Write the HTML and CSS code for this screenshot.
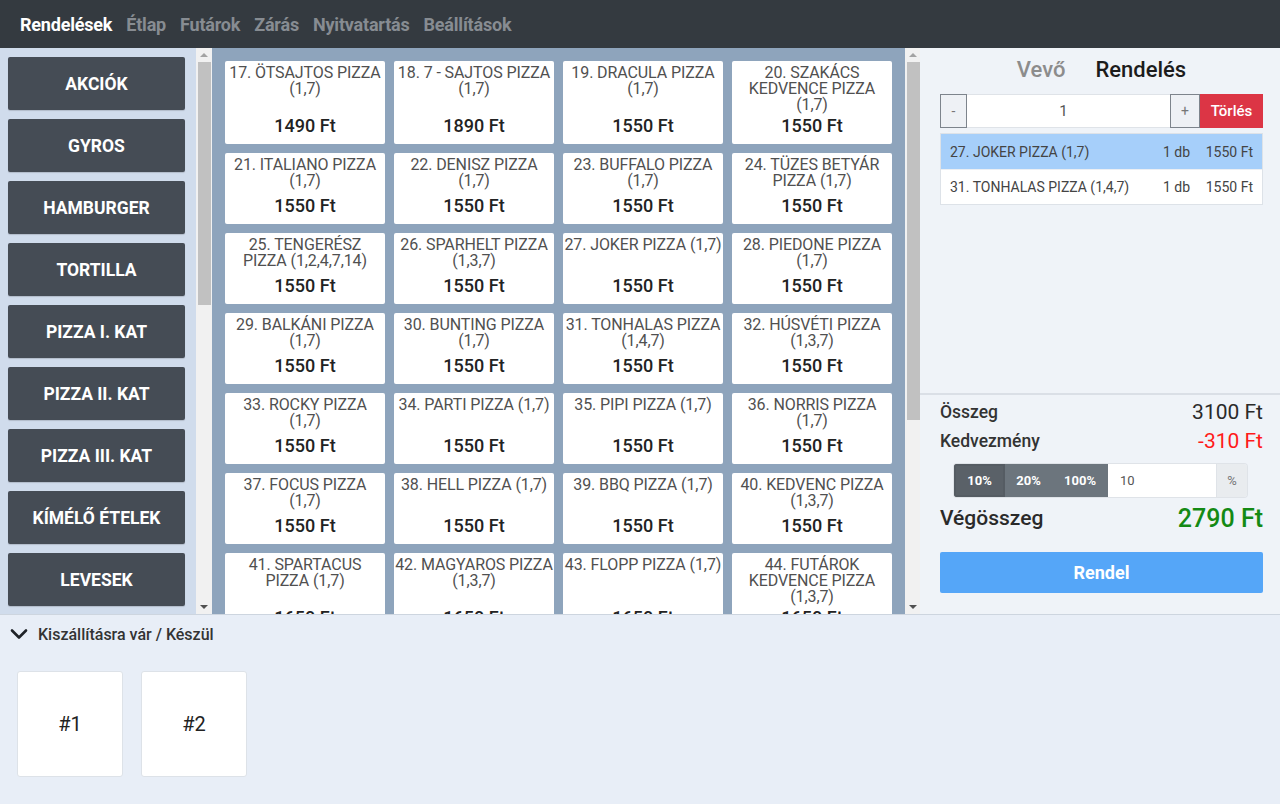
FILE: index.html
```html
<!DOCTYPE html>
<html lang="hu">
<head>
<meta charset="utf-8">
<title>Rendelések</title>
<link rel="stylesheet" href="styles.css">
</head>
<body>
<header class="topbar">
  <a class="nav-item active">Rendelések</a>
  <a class="nav-item">Étlap</a>
  <a class="nav-item">Futárok</a>
  <a class="nav-item">Zárás</a>
  <a class="nav-item">Nyitvatartás</a>
  <a class="nav-item">Beállítások</a>
</header>

<main class="main">
  <div class="cats">
    <nav class="cat-list">
      <button class="cat">AKCIÓK</button>
      <button class="cat">GYROS</button>
      <button class="cat">HAMBURGER</button>
      <button class="cat">TORTILLA</button>
      <button class="cat">PIZZA I. KAT</button>
      <button class="cat">PIZZA II. KAT</button>
      <button class="cat">PIZZA III. KAT</button>
      <button class="cat">KÍMÉLŐ ÉTELEK</button>
      <button class="cat">LEVESEK</button>
    </nav>
    <div class="scrollbar sb-cats">
      <div class="sb-btn"><span class="tri-up"></span></div>
      <div class="sb-track"><div class="sb-thumb" style="height: 243px"></div></div>
      <div class="sb-btn"><span class="tri-down"></span></div>
    </div>
  </div>

  <div class="menu-wrap">
    <section class="menu">
      <div class="grid">
        <div class="item"><div class="name">17. ÖTSAJTOS PIZZA (1,7)</div><div class="price">1490 Ft</div></div>
        <div class="item"><div class="name">18. 7 - SAJTOS PIZZA (1,7)</div><div class="price">1890 Ft</div></div>
        <div class="item"><div class="name">19. DRACULA PIZZA (1,7)</div><div class="price">1550 Ft</div></div>
        <div class="item"><div class="name">20. SZAKÁCS KEDVENCE PIZZA (1,7)</div><div class="price">1550 Ft</div></div>
        <div class="item"><div class="name">21. ITALIANO PIZZA (1,7)</div><div class="price">1550 Ft</div></div>
        <div class="item"><div class="name">22. DENISZ PIZZA (1,7)</div><div class="price">1550 Ft</div></div>
        <div class="item"><div class="name">23. BUFFALO PIZZA (1,7)</div><div class="price">1550 Ft</div></div>
        <div class="item"><div class="name">24. TÜZES BETYÁR PIZZA (1,7)</div><div class="price">1550 Ft</div></div>
        <div class="item"><div class="name">25. TENGERÉSZ PIZZA (1,2,4,7,14)</div><div class="price">1550 Ft</div></div>
        <div class="item"><div class="name">26. SPARHELT PIZZA (1,3,7)</div><div class="price">1550 Ft</div></div>
        <div class="item"><div class="name">27. JOKER PIZZA (1,7)</div><div class="price">1550 Ft</div></div>
        <div class="item"><div class="name">28. PIEDONE PIZZA (1,7)</div><div class="price">1550 Ft</div></div>
        <div class="item"><div class="name">29. BALKÁNI PIZZA (1,7)</div><div class="price">1550 Ft</div></div>
        <div class="item"><div class="name">30. BUNTING PIZZA (1,7)</div><div class="price">1550 Ft</div></div>
        <div class="item"><div class="name">31. TONHALAS PIZZA (1,4,7)</div><div class="price">1550 Ft</div></div>
        <div class="item"><div class="name">32. HÚSVÉTI PIZZA (1,3,7)</div><div class="price">1550 Ft</div></div>
        <div class="item"><div class="name">33. ROCKY PIZZA<br>(1,7)</div><div class="price">1550 Ft</div></div>
        <div class="item"><div class="name">34. PARTI PIZZA (1,7)</div><div class="price">1550 Ft</div></div>
        <div class="item"><div class="name">35. PIPI PIZZA (1,7)</div><div class="price">1550 Ft</div></div>
        <div class="item"><div class="name">36. NORRIS PIZZA (1,7)</div><div class="price">1550 Ft</div></div>
        <div class="item"><div class="name">37. FOCUS PIZZA<br>(1,7)</div><div class="price">1550 Ft</div></div>
        <div class="item"><div class="name">38. HELL PIZZA (1,7)</div><div class="price">1550 Ft</div></div>
        <div class="item"><div class="name">39. BBQ PIZZA (1,7)</div><div class="price">1550 Ft</div></div>
        <div class="item"><div class="name">40. KEDVENC PIZZA (1,3,7)</div><div class="price">1550 Ft</div></div>
        <div class="item"><div class="name">41. SPARTACUS PIZZA (1,7)</div><div class="price">1650 Ft</div></div>
        <div class="item"><div class="name">42. MAGYAROS PIZZA (1,3,7)</div><div class="price">1650 Ft</div></div>
        <div class="item"><div class="name">43. FLOPP PIZZA (1,7)</div><div class="price">1650 Ft</div></div>
        <div class="item"><div class="name">44. FUTÁROK KEDVENCE PIZZA (1,3,7)</div><div class="price">1650 Ft</div></div>
      </div>
    </section>
    <div class="scrollbar sb-menu">
      <div class="sb-btn"><span class="tri-up"></span></div>
      <div class="sb-track"><div class="sb-thumb" style="height: 358px"></div></div>
      <div class="sb-btn"><span class="tri-down"></span></div>
    </div>
  </div>

  <aside class="order">
    <div class="order-top">
      <div class="tabs">
        <span class="tab">Vevő</span>
        <span class="tab active">Rendelés</span>
      </div>
      <div class="qty">
        <button class="qty-btn minus">-</button>
        <div class="qty-input">1</div>
        <button class="qty-btn plus">+</button>
        <button class="del-btn">Törlés</button>
      </div>
      <div class="lines">
        <div class="line selected"><span class="line-name">27. JOKER PIZZA (1,7)</span><span class="line-qty">1 db</span><span class="line-price">1550 Ft</span></div>
        <div class="line"><span class="line-name">31. TONHALAS PIZZA (1,4,7)</span><span class="line-qty">1 db</span><span class="line-price">1550 Ft</span></div>
      </div>
    </div>
    <div class="order-bottom">
      <div class="sum-row"><span class="sum-label">Összeg</span><span class="sum-value">3100 Ft</span></div>
      <div class="sum-row"><span class="sum-label">Kedvezmény</span><span class="sum-value discount">-310 Ft</span></div>
      <div class="disc">
        <button class="disc-btn active">10%</button>
        <button class="disc-btn">20%</button>
        <button class="disc-btn wide">100%</button>
        <div class="disc-input">10</div>
        <div class="disc-addon">%</div>
      </div>
      <div class="total-row"><span class="total-label">Végösszeg</span><span class="total-value">2790 Ft</span></div>
      <button class="submit">Rendel</button>
    </div>
  </aside>
</main>

<section class="queue">
  <div class="queue-head">
    <svg class="chev" width="18" height="12" viewBox="0 0 18 12"><polyline points="2,2.5 9,9.5 16,2.5" fill="none" stroke="#1f2328" stroke-width="2.6" stroke-linecap="round" stroke-linejoin="round"/></svg>
    <span>Kiszállításra vár / Készül</span>
  </div>
  <div class="queue-cards">
    <div class="qcard">#1</div>
    <div class="qcard">#2</div>
  </div>
</section>
</body>
</html>
```
FILE: styles.css
```css
* { box-sizing: border-box; }
html, body { margin: 0; padding: 0; }
body {
  font-family: Roboto, "Liberation Sans", sans-serif;
  width: 1280px;
  height: 804px;
  overflow: hidden;
  background: #e8eef7;
  color: #222;
}
button { font-family: inherit; }

.topbar {
  height: 48px;
  background: #343a40;
  display: flex;
  align-items: center;
  padding-left: 20px;
  gap: 14px;
}
.nav-item {
  font-size: 18px;
  font-weight: 700;
  color: #878c92;
  letter-spacing: -0.2px;
}
.nav-item.active { color: #fff; }

.main {
  display: flex;
  height: 567px;
  border-bottom: 1px solid #cdd5df;
}

/* fake classic scrollbars */
.scrollbar {
  flex: none;
  display: flex;
  flex-direction: column;
  background: #f1f1f1;
}
.sb-cats { width: 16px; }
.sb-menu { width: 15px; }
.sb-btn {
  height: 14px;
  display: flex;
  align-items: center;
  justify-content: center;
}
.tri-up, .tri-down {
  width: 0;
  height: 0;
  border-left: 4px solid transparent;
  border-right: 4px solid transparent;
}
.tri-up { border-bottom: 4px solid #a3a3a3; }
.tri-down { border-top: 4px solid #505050; }
.sb-track { flex: 1; padding: 0 1px 0 2px; }
.sb-menu .sb-track { padding: 0 0 0 2px; }
.sb-thumb { background: #c1c1c1; }

.cats {
  width: 212px;
  flex: none;
  display: flex;
  background: #d0dcec;
}
.cat-list {
  flex: 1;
  overflow: hidden;
  padding: 9px 11px 0 8px;
  display: flex;
  flex-direction: column;
  gap: 9px;
}
.cat {
  flex: none;
  height: 53px;
  width: 177px;
  border: none;
  border-radius: 2px;
  background: #454c55;
  color: #fff;
  font-size: 17.5px;
  font-weight: 700;
  box-shadow: 0 1px 1px rgba(0,0,0,0.15);
}

.menu-wrap {
  width: 708px;
  flex: none;
  display: flex;
}
.menu {
  flex: 1;
  background: #8ea4bc;
  overflow: hidden;
  padding: 13px;
}
.grid {
  display: grid;
  grid-template-columns: repeat(4, 160px);
  gap: 9px;
}
.item {
  background: #fff;
  border-radius: 2px;
  min-height: 71px;
  padding: 4px 0 7px;
  display: flex;
  flex-direction: column;
  justify-content: space-between;
  text-align: center;
}
.name {
  font-size: 16px;
  line-height: 16px;
  letter-spacing: -0.1px;
  color: #505050;
}
.price {
  margin-top: 2px;
  font-size: 18px;
  line-height: 22px;
  font-weight: 500;
  color: #222;
}

.order {
  flex: 1;
  background: #eff3f8;
  display: flex;
  flex-direction: column;
}
.order-top {
  flex: 1;
  padding: 0 17px 0 20px;
}
.tabs {
  display: flex;
  justify-content: center;
  gap: 30px;
  padding-top: 8px;
  height: 46px;
  font-size: 22px;
  font-weight: 500;
  line-height: 28px;
}
.tab { color: #8c8c8c; }
.tab.active { color: #1c1c1c; }

.qty {
  display: flex;
  height: 34px;
}
.qty-btn {
  border: 1px solid #7d848c;
  background: #eef1f5;
  color: #777;
  font-size: 14px;
  padding: 0;
}
.qty-btn.minus { width: 27px; }
.qty-btn.plus { width: 30px; }
.qty-input {
  flex: 1;
  background: #fff;
  border-top: 1px solid #dfe3e8;
  border-bottom: 1px solid #dfe3e8;
  text-align: center;
  line-height: 32px;
  font-size: 15px;
  color: #555;
  padding-right: 10px;
}
.del-btn {
  width: 63px;
  border: none;
  background: #dc3545;
  color: #fff;
  font-size: 15px;
  font-weight: 500;
  padding: 0;
}

.lines {
  margin-top: 5px;
  border: 1px solid #dde2e8;
  background: #fff;
}
.line {
  display: flex;
  align-items: center;
  height: 35px;
  padding: 0 9px;
  font-size: 14px;
  color: #444;
}
.line + .line { border-top: 1px solid #eceff3; }
.line.selected { background: #a6cffa; }
.line-name { flex: 1; }
.line-qty { width: 30px; margin-right: 15px; text-align: right; }
.line-price { width: 48px; text-align: right; }

.order-bottom {
  border-top: 2px solid #dadfe6;
  padding: 2px 17px 21px 20px;
}
.sum-row {
  display: flex;
  justify-content: space-between;
  align-items: center;
  height: 29px;
}
.sum-label { font-size: 17.5px; color: #333; font-weight: 500; }
.sum-value { font-size: 21px; color: #2a2a2a; }
.sum-value.discount { color: #ff1a1a; }

.disc {
  display: flex;
  height: 33px;
  margin: 9px 16px 0 14px;
  border-radius: 3px;
  overflow: hidden;
  box-shadow: 0 0 0 1px #dfe3e8;
}
.disc-btn {
  border: none;
  background: #6c757d;
  color: #fff;
  font-size: 13px;
  font-weight: 700;
  padding: 0;
  width: 47px;
}
.disc-btn.active { width: 51px; background: #5a6168; box-shadow: inset 0 0 0 2px #555c63; }
.disc-btn.wide { width: 56px; }
.disc-input {
  width: 108px;
  background: #fff;
  font-size: 13px;
  color: #555;
  line-height: 33px;
  padding-left: 12px;
}
.disc-addon {
  flex: 1;
  background: #e9ecef;
  border-left: 1px solid #dfe3e8;
  color: #777;
  font-size: 13px;
  text-align: center;
  line-height: 33px;
}

.total-row {
  display: flex;
  justify-content: space-between;
  align-items: center;
  height: 30px;
  margin-top: 6px;
}
.total-label { font-size: 21px; font-weight: 500; color: #2a2a2a; }
.total-value { font-size: 25px; font-weight: 500; color: #148a14; }

.submit {
  display: block;
  width: 100%;
  height: 41px;
  margin-top: 19px;
  border: none;
  border-radius: 2px;
  background: #55a6f8;
  color: #fff;
  font-size: 18px;
  font-weight: 700;
}

.queue {
  height: 189px;
  background: #e8eef7;
}
.queue-head {
  display: flex;
  align-items: center;
  gap: 10px;
  height: 38px;
  padding-left: 10px;
  font-size: 16px;
  font-weight: 500;
  color: #333;
}
.queue-cards {
  display: flex;
  gap: 18px;
  padding: 18px 0 0 17px;
}
.qcard {
  width: 106px;
  height: 106px;
  background: #fff;
  border: 1px solid #dde2e8;
  border-radius: 3px;
  display: flex;
  align-items: center;
  justify-content: center;
  font-size: 20px;
  color: #222;
}
```
